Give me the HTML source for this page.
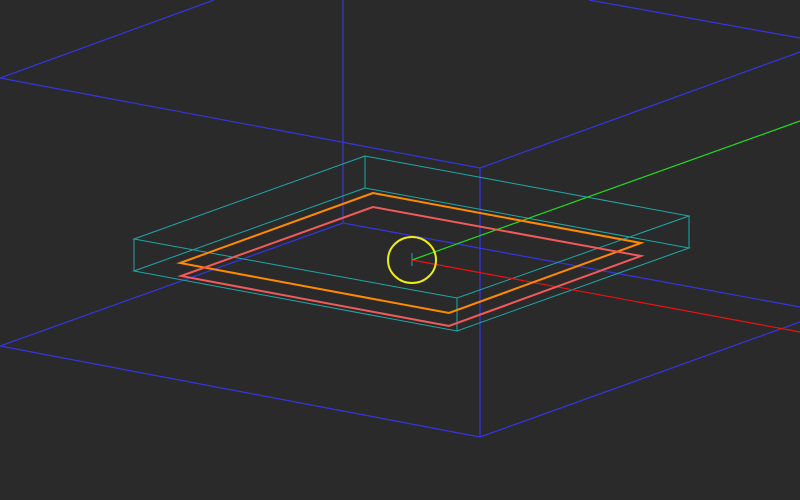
<!DOCTYPE html>
<html><head><style>html,body{margin:0;padding:0;background:#2a2a2a;overflow:hidden}svg{display:block}</style></head><body>
<svg width="800" height="500" viewBox="0 0 800 500" xmlns="http://www.w3.org/2000/svg">
<rect width="800" height="500" fill="#2a2a2a"/>
<g stroke="#3535e0" stroke-width="1.2" fill="none">
<line x1="0" y1="78" x2="214" y2="0"/>
<line x1="0" y1="78" x2="480" y2="168"/>
<line x1="343" y1="0" x2="343" y2="223"/>
<line x1="480" y1="168" x2="480" y2="437"/>
<line x1="480" y1="168" x2="800" y2="52"/>
<line x1="589" y1="0" x2="800" y2="38"/>
<line x1="343" y1="223" x2="0" y2="346"/>
<line x1="343" y1="223" x2="800" y2="307"/>
<line x1="0" y1="346" x2="480" y2="437"/>
<line x1="480" y1="437" x2="800" y2="322"/>
</g>
<g stroke="#1fa8a8" stroke-width="1" fill="none">
<polygon points="365,156 134,239 457,298 689,216"/>
<polygon points="365,188 134,271 457,331 689,248"/>
<line x1="134" y1="239" x2="134" y2="271"/>
<line x1="365" y1="156" x2="365" y2="188"/>
<line x1="457" y1="298" x2="457" y2="331"/>
<line x1="689" y1="216" x2="689" y2="248"/>
<line x1="412" y1="253" x2="412" y2="266"/>
</g>
<line x1="412" y1="260" x2="800" y2="121" stroke="#22dd22" stroke-width="1.2"/>
<line x1="412" y1="260" x2="800" y2="332" stroke="#ee1111" stroke-width="1.2"/>
<polygon points="373,193 180,263 449,313 641,243" stroke="#ff8a00" stroke-width="2" fill="none"/>
<polygon points="373,207 181,276 449,326 641,256" stroke="#f05a5a" stroke-width="2" fill="none"/>
<ellipse cx="412" cy="260" rx="24" ry="23" stroke="#eeee11" stroke-width="2" fill="none"/>
</svg>
</body></html>
